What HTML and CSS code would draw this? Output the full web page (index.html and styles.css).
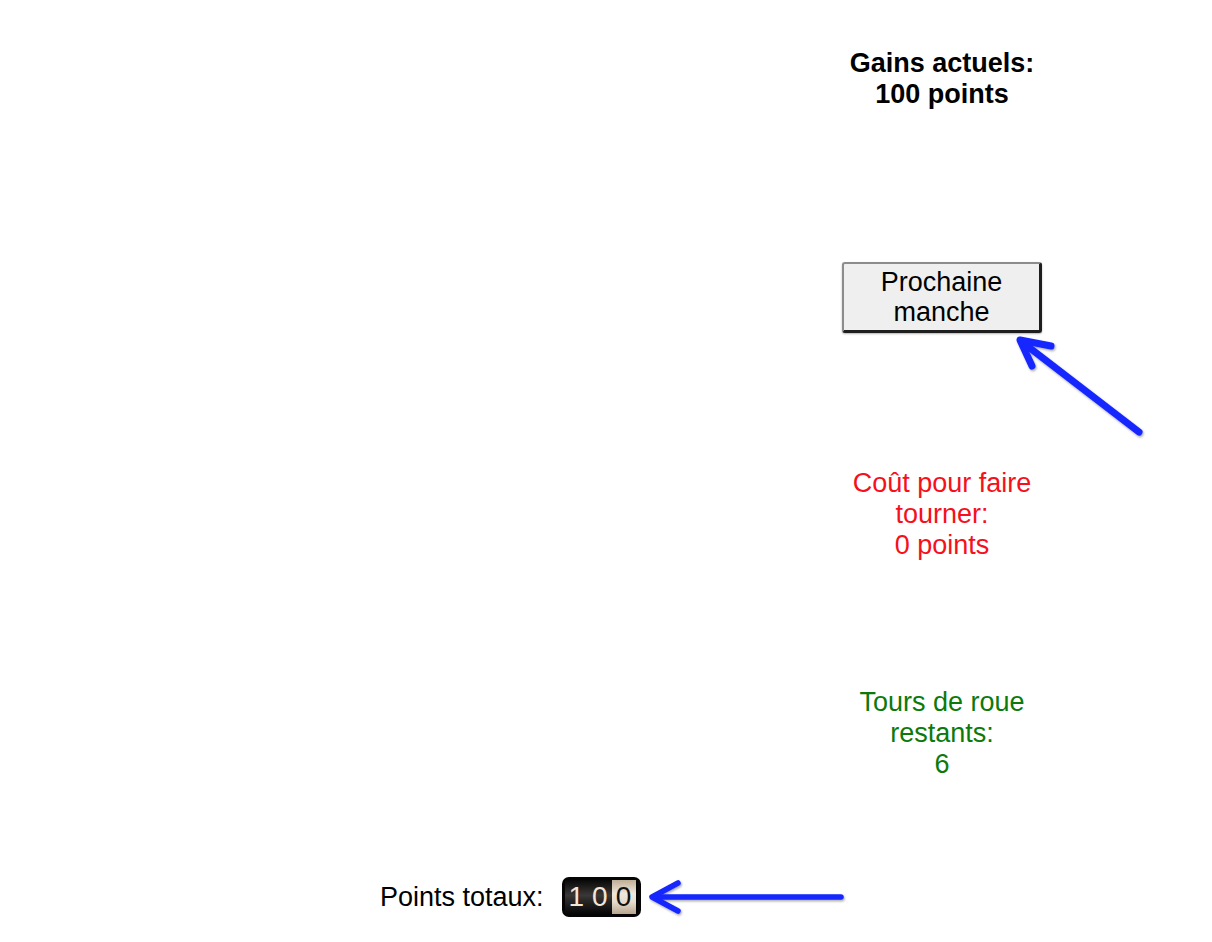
FILE: index.html
```html
<!DOCTYPE html>
<html lang="fr">
<head>
<meta charset="utf-8">
<title>Roue</title>
<link rel="stylesheet" href="styles.css">
</head>
<body>
<div class="game">
  <div class="board">
    <div class="side">
      <div class="gains">Gains actuels:<br>100 points</div>
      <button class="next">Prochaine<br>manche</button>
      <div class="cost">Coût pour faire<br>tourner:<br>0 points</div>
      <div class="spins">Tours de roue<br>restants:<br>6</div>
    </div>
  </div>
  <div class="footer">
    <span class="total-label">Points totaux:</span>
    <span class="counter">
      <span class="cell dark">1</span><span class="cell dark">0</span><span class="cell light">0</span>
    </span>
  </div>
</div>
<svg class="annot" width="1212" height="942" viewBox="0 0 1212 942">
  <defs>
    <filter id="sh" x="-10%" y="-10%" width="120%" height="120%">
      <feDropShadow dx="1" dy="1.5" stdDeviation="1.2" flood-color="#000" flood-opacity="0.35"/>
    </filter>
  </defs>
  <g fill="none" stroke="#1626ff" stroke-linecap="round" stroke-linejoin="round" filter="url(#sh)">
    <g stroke-width="7">
      <path d="M1139 432 L1022 342"/>
      <path d="M1051 346 L1020 340 L1032 366"/>
    </g>
    <g stroke-width="5.5">
      <path d="M841 897 L654 897"/>
      <path d="M678 883 L652 897 L678 911"/>
    </g>
  </g>
</svg>
</body>
</html>
```
FILE: styles.css
```css
html, body {
  margin: 0;
  padding: 0;
  background: #fff;
}
body {
  font-family: "Liberation Sans", Arial, sans-serif;
  font-size: 27px;
  color: #000;
  position: relative;
  width: 1212px;
  height: 942px;
  overflow: hidden;
}
.game {
  display: flex;
  flex-direction: column;
}
.board {
  display: flex;
  justify-content: flex-end;
  padding-right: 170px;
}
.side {
  width: 200px;
  display: flex;
  flex-direction: column;
  align-items: center;
  text-align: center;
  padding-top: 48px;
  line-height: 31px;
}
.gains {
  font-weight: bold;
}
.next {
  margin-top: 152px;
  width: 200px;
  height: 71px;
  padding: 0;
  font-family: "Liberation Sans", Arial, sans-serif;
  font-size: 27px;
  line-height: 30px;
  color: #000;
  background: #efefef;
  border: 2px solid;
  border-color: #8c8c8c #1e1e1e #1e1e1e #8c8c8c;
  border-width: 2px 3px 3px 2px;
  border-radius: 3px;
  box-shadow: 0 1px 2px rgba(0,0,0,0.3);
}
.cost {
  margin-top: 135px;
  color: #f5101c;
}
.spins {
  margin-top: 126px;
  color: #0b7a0b;
}
.footer {
  display: flex;
  align-items: center;
  padding-left: 380px;
  margin-top: 97px;
  height: 40px;
}
.total-label {
  margin-right: 18px;
}
.counter {
  display: inline-flex;
  background: #000;
  border: 3px solid #050505;
  border-radius: 7px;
  padding: 0 2px 0 0;
  height: 34px;
}
.cell {
  display: flex;
  align-items: center;
  justify-content: center;
  font-size: 28px;
  line-height: 34px;
  width: 23.5px;
}
.dark {
  color: #f3e6d6;
  background: linear-gradient(#080808 0%, #3a3836 45%, #2a2826 60%, #060606 100%);
}
.light {
  color: #111;
  width: 24px;
  background: linear-gradient(#bfae96 0%, #efe7dc 40%, #e6dccd 65%, #b8a68e 100%);
}
.annot {
  position: absolute;
  left: 0;
  top: 0;
  pointer-events: none;
}
```
